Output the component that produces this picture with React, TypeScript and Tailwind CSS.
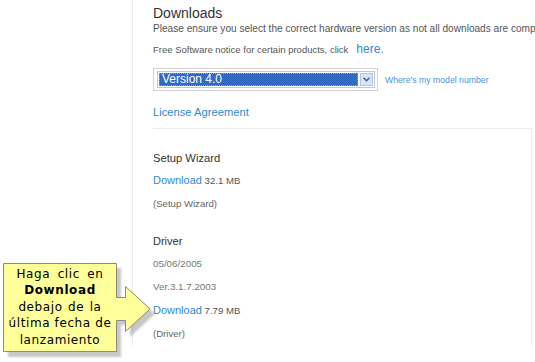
import React from "react";

const sans = { fontFamily: '"Liberation Sans", Arial, sans-serif' };

export default function App() {
  return (
    <div className="relative w-[535px] h-[362px] bg-white overflow-hidden" style={sans}>
      <div className="ml-[132px] h-[346px] border-l border-[#ececec] pl-[20px]">
        <div className="pt-[4px] text-[14px] leading-[18px] text-[#333]">Downloads</div>
        <div className="w-[383px] overflow-hidden text-[10.1px] leading-[13px] text-[#555] whitespace-nowrap">
          Please ensure you select the correct hardware version as not all downloads are compatible
        </div>
        <div className="mt-[7px] flex items-baseline text-[9.5px] leading-[14px] text-[#555] whitespace-nowrap">
          <span>Free Software notice for certain products, click</span>
          <span className="ml-[8px] text-[12px] text-[#2f8ad0]">here.</span>
        </div>
        <div className="mt-[11px] flex items-center">
          <div className="w-[225px] h-[23px] border border-[#d4d4d4] flex items-center pl-[3px]">
            <div className="w-[218px] h-[17px] border border-[#b9c9e6] bg-white flex items-center pl-[1px] pr-[1px]">
              <div className="flex-1 h-[13px] bg-[#316ac5] border border-dotted border-[#c9a23a] text-white text-[12px] leading-[11px] pl-[2px]">
                Version 4.0
              </div>
              <div className="ml-[2px] w-[13px] h-[13px] bg-[#d7e3f8] border border-[#b3c6ea] flex items-center justify-center">
                <svg width="7" height="5" viewBox="0 0 7 5">
                  <path d="M0.5 0.8 L3.5 3.8 L6.5 0.8" stroke="#4d6185" strokeWidth="1.5" fill="none" />
                </svg>
              </div>
            </div>
          </div>
          <div className="ml-[7px] text-[8.7px] leading-[12px] text-[#4a94d6]">Where's my model number</div>
        </div>
        <div className="mt-[13px] text-[11.2px] leading-[16px] text-[#2f8ad0]">License Agreement</div>
        <div className="mt-[8px] border-t border-r border-[#ececec] w-[379px] h-[219px] pt-[21px]">
          <div className="text-[11.2px] leading-[16px] text-[#333]">Setup Wizard</div>
          <div className="mt-[6px] text-[9.6px] leading-[16px] text-[#555]">
            <span className="text-[11px] text-[#2f8ad0]">Download</span> 32.1 MB
          </div>
          <div className="mt-[7px] text-[9.6px] leading-[16px] text-[#666]">(Setup Wizard)</div>
          <div className="mt-[21px] text-[11px] leading-[16px] text-[#333]">Driver</div>
          <div className="mt-[7px] text-[9.8px] leading-[16px] text-[#777]">05/06/2005</div>
          <div className="mt-[7px] text-[9.8px] leading-[16px] text-[#777]">Ver.3.1.7.2003</div>
          <div className="mt-[7px] text-[9.6px] leading-[16px] text-[#555]">
            <span className="text-[11px] text-[#2f8ad0]">Download</span> 7.79 MB
          </div>
          <div className="mt-[7px] text-[9.6px] leading-[16px] text-[#666]">(Driver)</div>
        </div>
      </div>

      <svg className="absolute left-0 top-[255px]" width="160" height="107" viewBox="0 0 160 107">
        <defs>
          <filter id="sh" x="-10%" y="-10%" width="130%" height="130%">
            <feGaussianBlur stdDeviation="1.2" />
          </filter>
        </defs>
        <polygon
          points="3,8 116,8 116,42 125,42 125,31 150,54 125,77 125,65 116,65 116,97 3,97"
          transform="translate(5,5)"
          fill="#9a9a9a"
          opacity="0.55"
          filter="url(#sh)"
        />
        <polygon
          points="3.5,8.5 116.5,8.5 116.5,42.5 125.5,42.5 125.5,31.5 150,54 125.5,76.5 125.5,65.5 116.5,65.5 116.5,96.5 3.5,96.5"
          fill="#ffff99"
          stroke="#8a8a8a"
          strokeWidth="1"
        />
      </svg>
      <div
        className="absolute left-[3px] top-[262px] w-[114px] h-[90px] flex flex-col items-center justify-center text-[12px] leading-[16.6px] text-black tracking-[0.6px]"
        style={{ fontFamily: '"DejaVu Sans", Verdana, sans-serif' }}
      >
        <div className="[word-spacing:3px]">Haga clic en</div>
        <div className="font-bold">Download</div>
        <div className="[word-spacing:1px]">debajo de la</div>
        <div>última fecha de</div>
        <div>lanzamiento</div>
      </div>
    </div>
  );
}
